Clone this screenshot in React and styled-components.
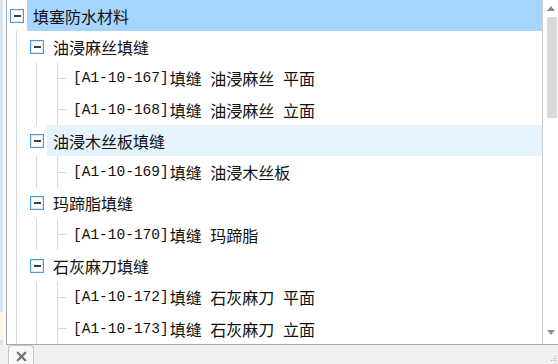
import styled, { createGlobalStyle } from 'styled-components';
import { X } from 'lucide-react';

const GlobalStyle = createGlobalStyle`
  html, body {
    margin: 0;
    padding: 0;
    background: #f0f0f0;
  }
  body {
    font-family: "Noto Sans CJK SC", "Noto Sans", sans-serif;
    overflow: hidden;
  }
`;

const tree = [
  {
    title: '填塞防水材料',
    selected: true,
    children: [
      {
        title: '油浸麻丝填缝',
        children: [
          { code: 'A1-10-167', text: '填缝 油浸麻丝 平面' },
          { code: 'A1-10-168', text: '填缝 油浸麻丝 立面' },
        ],
      },
      {
        title: '油浸木丝板填缝',
        hover: true,
        children: [{ code: 'A1-10-169', text: '填缝 油浸木丝板' }],
      },
      {
        title: '玛蹄脂填缝',
        children: [{ code: 'A1-10-170', text: '填缝 玛蹄脂' }],
      },
      {
        title: '石灰麻刀填缝',
        children: [
          { code: 'A1-10-172', text: '填缝 石灰麻刀 平面' },
          { code: 'A1-10-173', text: '填缝 石灰麻刀 立面' },
        ],
      },
    ],
  },
];

// flatten the tree into visible rows
const flatten = (nodes, depth = 0, out = []) => {
  nodes.forEach((n) => {
    out.push({ ...n, depth });
    if (n.children) flatten(n.children, depth + 1, out);
  });
  return out;
};

const rows = flatten(tree);

const App = () => {
  return (
    <>
      <GlobalStyle />
      <Page>
        <Main>
          <SideStrip>
            <StripNote />
          </SideStrip>
          <Gutter />
          <Panel>
            <TreeArea>
              {rows.map((r, i) => (
                <Row key={i}>
                  {Array.from({ length: r.depth }).map((_, k) => (
                    <Indent key={k} />
                  ))}
                  {r.children ? (
                    <ToggleCell>
                      <Toggle />
                    </ToggleCell>
                  ) : (
                    <Branch />
                  )}
                  <Label $state={r.selected ? 'selected' : r.hover ? 'hover' : ''}>
                    {r.code && <Code>[{r.code}]</Code>}
                    {r.code ? r.text : r.title}
                  </Label>
                </Row>
              ))}
            </TreeArea>
            <ScrollBar>
              <ArrowBox>
                <Arrow $dir="up" />
              </ArrowBox>
              <Track>
                <Thumb />
              </Track>
              <ArrowBox $bottom>
                <Arrow $dir="down" />
              </ArrowBox>
            </ScrollBar>
          </Panel>
        </Main>
        <Footer>
          <CloseTab>
            <X size={15} strokeWidth={3.4} color="#6e6e6e" />
          </CloseTab>
          <Grip width="6" height="6" viewBox="0 0 6 6">
            <rect x="4" y="0" width="1" height="1" fill="#b0b0b0" />
            <rect x="2" y="2" width="1" height="1" fill="#b0b0b0" />
            <rect x="4" y="2" width="1" height="1" fill="#b0b0b0" />
            <rect x="0" y="4" width="1" height="1" fill="#b0b0b0" />
            <rect x="2" y="4" width="1" height="1" fill="#b0b0b0" />
            <rect x="4" y="4" width="1" height="1" fill="#b0b0b0" />
          </Grip>
        </Footer>
      </Page>
    </>
  );
};

export default App;

const Page = styled.div`
  width: 558px;
  height: 364px;
  display: flex;
  flex-direction: column;
  overflow: hidden;
`;

const Main = styled.div`
  display: flex;
  height: 346px;
`;

const SideStrip = styled.div`
  width: 3px;
  background: #d7e4f1;
  display: flex;
  flex-direction: column;
  padding-top: 312px;
`;

const StripNote = styled.div`
  height: 28px;
  background: #fbf5e5;
`;

const Gutter = styled.div`
  width: 3px;
  background: #f7f9fb;
`;

const Panel = styled.div`
  flex: 1;
  display: flex;
  background: #fff;
  border-left: 1px solid #a9a9a9;
  border-bottom: 1px solid #a9a9a9;
  overflow: hidden;
`;

const TreeArea = styled.div`
  width: 535px;
  overflow: hidden;
`;

const Row = styled.div`
  display: flex;
  height: 31.3px;
`;

const lineColor = '#d9d9d9';

const Indent = styled.div`
  width: 20px;
  flex: none;
  background: linear-gradient(${lineColor}, ${lineColor}) no-repeat 9px 0 / 1px 100%;
`;

const Branch = styled.div`
  width: 20px;
  flex: none;
  background:
    linear-gradient(${lineColor}, ${lineColor}) no-repeat 10px 0 / 1px 100%,
    linear-gradient(${lineColor}, ${lineColor}) no-repeat 10px 50% / 10px 1px;
`;

const ToggleCell = styled.div`
  width: 20px;
  flex: none;
  display: flex;
  align-items: center;
  justify-content: center;
`;

const Toggle = styled.div`
  width: 12px;
  height: 12px;
  border: 1px solid #4d9ad6;
  box-shadow: inset 0 0 0 1px #d9ecfa;
  background: #fff;
  display: flex;
  align-items: center;
  justify-content: center;
  &::after {
    content: '';
    width: 7px;
    height: 2px;
    background: #3c3c3c;
  }
`;

const Label = styled.div`
  flex: 1;
  display: flex;
  align-items: center;
  padding-left: 6px;
  font-size: 16px;
  color: #111;
  white-space: pre;
  word-spacing: 5px;
  background: ${(p) =>
    p.$state === 'selected' ? '#a6d5ff' : p.$state === 'hover' ? '#e5f3fd' : 'transparent'};
`;

const Code = styled.span`
  font-family: "Liberation Mono", monospace;
  font-size: 14.5px;
  word-spacing: 0;
  margin-right: 1px;
`;

const ScrollBar = styled.div`
  width: 15px;
  border-left: 1px solid #cfcfcf;
  display: flex;
  flex-direction: column;
`;

const ArrowBox = styled.div`
  height: ${(p) => (p.$bottom ? '19px' : '17px')};
  display: flex;
  justify-content: center;
  align-items: ${(p) => (p.$bottom ? 'flex-start' : 'center')};
  padding-top: ${(p) => (p.$bottom ? '5px' : '0')};
  box-sizing: border-box;
`;

const Arrow = styled.div`
  width: 0;
  height: 0;
  border-left: 4.5px solid transparent;
  border-right: 4.5px solid transparent;
  ${(p) =>
    p.$dir === 'up' ? 'border-bottom: 5px solid #8c8c8c;' : 'border-top: 5px solid #8c8c8c;'}
`;

const Track = styled.div`
  flex: 1;
  display: flex;
  flex-direction: column;
  align-items: flex-end;
  padding-right: 1px;
`;

const Thumb = styled.div`
  width: 10px;
  height: 101px;
  background: #d9d9d9;
`;

const Footer = styled.div`
  flex: 1;
  display: flex;
  align-items: flex-end;
  justify-content: space-between;
  padding: 0 1px 1px 8px;
`;

const CloseTab = styled.div`
  width: 24px;
  height: 16px;
  border: 1px solid #c6c6c6;
  border-bottom: none;
  border-radius: 4px 4px 0 0;
  background: #f8f8f8;
  display: flex;
  justify-content: center;
  padding-top: 3px;
  margin-bottom: -2px;
`;

const Grip = styled.svg`
  display: block;
  margin-bottom: 1px;
`;
